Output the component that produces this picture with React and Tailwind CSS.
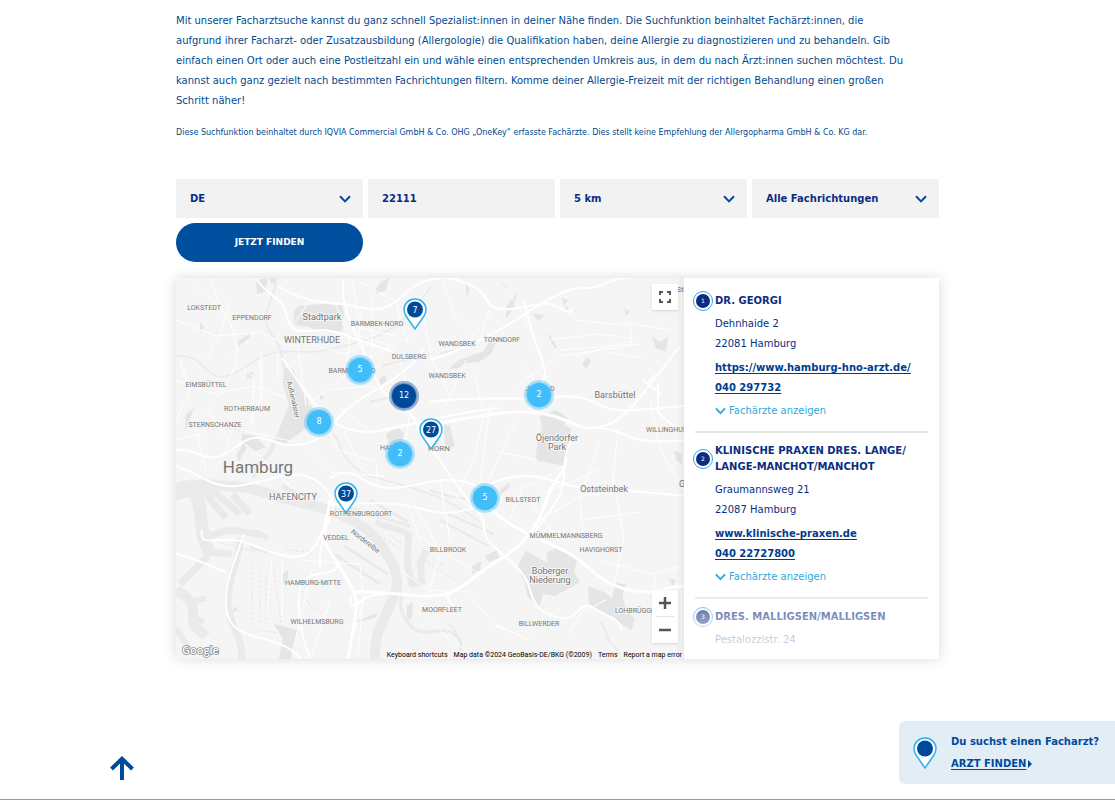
import React, { useState } from 'react';

const clusters = [
  { id: 'c1', x: 184, y: 92, count: 5 },
  { id: 'c2', x: 228, y: 118, count: 12, dark: true },
  { id: 'c3', x: 143, y: 144, count: 8 },
  { id: 'c4', x: 224, y: 176, count: 2 },
  { id: 'c5', x: 363, y: 117, count: 2 },
  { id: 'c6', x: 309, y: 220, count: 5 },
];

// x / y is the tip of the pin
const pins = [
  { id: 'p1', x: 239, y: 52, count: 7 },
  { id: 'p2', x: 255, y: 172, count: 27 },
  { id: 'p3', x: 170, y: 236, count: 37 },
];

const labels = [
  { t: 'LOKSTEDT', x: 204, y: 310, s: 7 },
  { t: 'EPPENDORF', x: 252, y: 320, s: 7 },
  { t: 'Stadtpark', x: 322, y: 320, s: 9 },
  { t: 'BARMBEK-NORD', x: 377, y: 326, s: 7 },
  { t: 'WINTERHUDE', x: 312, y: 343, s: 9 },
  { t: 'DULSBERG', x: 409, y: 359, s: 7 },
  { t: 'WANDSBEK', x: 457, y: 346, s: 7 },
  { t: 'TONNDORF', x: 502, y: 342, s: 7 },
  { t: 'BARMBEK-SÜD', x: 352, y: 373, s: 7 },
  { t: 'WANDSBEK', x: 447, y: 378, s: 7 },
  { t: 'EIMSBÜTTEL', x: 206, y: 387, s: 7 },
  { t: 'ROTHERBAUM', x: 247, y: 411, s: 7 },
  { t: 'STERNSCHANZE', x: 215, y: 427, s: 7 },
  { t: 'JENFELD', x: 540, y: 391, s: 7 },
  { t: 'Barsbüttel', x: 615, y: 398, s: 9 },
  { t: 'WILLINGHUSEN', x: 671, y: 432, s: 7 },
  { t: 'Öjendorfer', x: 557, y: 441, s: 9 },
  { t: 'Park', x: 557, y: 450, s: 9 },
  { t: 'HAMM', x: 391, y: 450, s: 7 },
  { t: 'HORN', x: 439, y: 451, s: 8 },
  { t: 'Hamburg', x: 258, y: 473, s: 17 },
  { t: 'HAFENCITY', x: 293, y: 500, s: 9 },
  { t: 'ROTHENBURGSORT', x: 361, y: 516, s: 7 },
  { t: 'BILLSTEDT', x: 523, y: 502, s: 7 },
  { t: 'Oststeinbek', x: 604, y: 492, s: 9 },
  { t: 'VEDDEL', x: 336, y: 540, s: 7 },
  { t: 'MÜMMELMANNSBERG', x: 566, y: 538, s: 7 },
  { t: 'BILLBROOK', x: 448, y: 552, s: 7 },
  { t: 'HAVIGHORST', x: 601, y: 552, s: 7 },
  { t: 'Boberger', x: 550, y: 574, s: 9 },
  { t: 'Niederung', x: 550, y: 583, s: 9 },
  { t: 'HAMBURG-MITTE', x: 313, y: 585, s: 7 },
  { t: 'MOORFLEET', x: 442, y: 612, s: 7 },
  { t: 'LOHBRÜGGE', x: 635, y: 613, s: 7 },
  { t: 'WILHELMSBURG', x: 317, y: 624, s: 7 },
  { t: 'BILLWERDER', x: 539, y: 626, s: 7 },
  { t: 'Sta', x: 682, y: 292, s: 8 },
  { t: 'G', x: 682, y: 487, s: 9 },
];

const doctors = [
  {
    name: ['DR. GEORGI'],
    street: 'Dehnhaide 2',
    city: '22081 Hamburg',
    url: 'https://www.hamburg-hno-arzt.de/',
    phone: '040 297732',
  },
  {
    name: ['KLINISCHE PRAXEN DRES. LANGE/', 'LANGE-MANCHOT/MANCHOT'],
    street: 'Graumannsweg 21',
    city: '22087 Hamburg',
    url: 'www.klinische-praxen.de',
    phone: '040 22727800',
  },
  {
    name: ['DRES. MALLIGSEN/MALLIGSEN'],
    street: 'Pestalozzistr. 24',
  },
];

function Chevron({ className }) {
  return (
    <svg viewBox="0 0 12 8" className={className} fill="none" stroke="currentColor" strokeWidth="2" aria-hidden="true">
      <path d="M1 1.2 6 6.4 11 1.2" />
    </svg>
  );
}

function Pin({ count }) {
  return (
    <svg viewBox="0 0 24 32" className="h-8 w-6" aria-hidden="true">
      <path
        d="M12 1C5.8 1 1 5.7 1 11.6c0 2.6 1 4.7 2.3 6.9L12 31l8.700-12.500C22 16.300 23 14.200 23 11.600 23 5.700 18.200 1 12 1Z"
        fill="#fff"
        stroke="#2fb4ea"
        strokeWidth="1.5"
      />
      <circle cx="12" cy="11.500" r="8" fill="#004a9c" />
      {count && (
        <text x="12" y="14.500" textAnchor="middle" fontSize="8" fill="#fff">
          {count}
        </text>
      )}
    </svg>
  );
}

function SelectField({ label, options }) {
  const [value, setValue] = useState(options[0]);
  return (
    <div className="relative">
      <select
        aria-label={label}
        value={value}
        onChange={(e) => setValue(e.target.value)}
        className="h-[39px] w-full appearance-none bg-[#f2f2f2] pr-8 pl-3.5 font-bold text-[#0a2d82]"
      >
        {options.map((o) => (
          <option key={o}>{o}</option>
        ))}
      </select>
      <Chevron className="pointer-events-none absolute top-4 right-3 h-2 w-3 text-[#004a9c]" />
    </div>
  );
}

function CityMap() {
  return (
    <svg
      viewBox="176 278 508 381"
      preserveAspectRatio="xMidYMid slice"
      className="h-full w-full"
      role="img"
      aria-label="Karte von Hamburg"
    >
      <rect x="176" y="278" width="508" height="381" fill="#f5f5f5" />

      {/* parks */}
      <g fill="#e5e5e5">
        <path d="m298 306 22-2 22 1 2 9-2 17-22 1-11-5-16-2 1-13z" />
        <path d="m540 416 16-6 12 8-4 7 7 3-2 22-4 16-30-6 3-20 4-13z" />
        <path d="m526 551 22 12-2-10 12-6 19 13-3 12 6 10-14 8-11 6-12-2-4 14-12-12-2-14-8-14z" />
        <path d="m588 586 18 7 6 6 4-17 8 4-1 12 4 13 8 8-4 12-8-6-22-12-12-9z" />
        <path d="m242 434 14 2-2 10-12-2zM256 437l10 10-10 4-8-5zM236 456l7-12 4 3-8 15z" />
        <path d="m652 336 7 6 9-5-2 15-10-4z" />
        <path d="m444 424 6 2 5 20-10 4zM432 432l8 8-3 8-6-2z" />
        <path d="m256 280 12-2-3 14-8 2zM237 342l12-8 1 3-11 9zM268 276h12l-8 8z" />
        <path d="m375 290 6-8 8-4-3 12-9 4zM507 305l10-12-3 14-8 12zM532 314l14 1-8 6zM562 310l6-4-1 5z" />
        <path d="m470 356 14-5 5-9 9-3-7 15-12 8-12 1-8 5-10 1 8-8z" />
        <path d="m549 333 8 14-2 2-6-11zM582 364l6-7 3 4-5 8zM624 308l6 4-4 3zM590 430l3-4 2 2z" />
        <path d="m472 566 10-5-2 9-8 4zM485 556l12-6 2 8-10 4zM500 490l10-8-1 6-10 8z" />
        <path d="m274 624 23 6-6 29h-12l4-20zM283 574l5-4v12l-5 3zM234 606l4 4-5 2zM356 621l22-8-3 5-17 4z" />
        <path d="m402 394 3-4 4 4v8l-6-2zM320 394l4 4-4 3zM379 379l6-4 2 6-6 4zM386 434l12-8 6 8-3 8-12 2z" />
        <path d="m674 450 8 4v10l-6-4zM618 584h8l-2 6-6-2zM668 578l8 2-3 6zM407 606l6-4-1 16-5 3z" />
        <path d="m186 414 8-6-5 14-4 10zM200 322l4 6-4 4zM247 372h6v6h-6zM466 284l4 6-4 6zM562 298l6 2-4 6z" />
      </g>

      {/* Alster */}
      <path
        d="m284 368 9 1 8 20 12 20 4 12-23 16-8 6-12-2 6-14 9-22-6-20z"
        fill="#e5e5e5"
      />
      <g fill="none" stroke="#eaeaea">
        <path d="M285 372c-3-12-2-20-7-28-6-10-14-17-12-30 2-12 10-20 10-36" strokeWidth="2" />
        <path d="M279 434c-5 6-6 12-9 18s-16 12-16 26" strokeWidth="4" />
        <path d="M317 418c10 12 18 14 23 28s14 24 30 30 70 14 110 46" strokeWidth="1.500" />
        <path d="M176 356c24-3 28 16 40 20s28-8 42-17 34-8 48-7 40-6 66-14 42-30 60-52" strokeWidth="1.500" />
        <path d="M382 366c20-6 54-14 80-16M370 402c10-4 26-4 44-8" strokeWidth="2" />
      </g>

      {/* Elbe and the harbour basins */}
      <g fill="none" stroke="#eaeaea" strokeLinejoin="round">
        <path d="M172 491c16-6 30-4 46-5s34 2 54 9 44 10 62 17 38 18 48 34 18 28 14 44-18 34-20 52-1 14-1 20" strokeWidth="10" />
        <path d="M172 493c16-6 30-5 46-5" strokeWidth="17" />
        <path d="M196 494c8 20 2 34 13 58" strokeWidth="13" />
        <path d="M207 496 226 518M214 492l26 22M232 494l18 20" strokeWidth="7" />
        <path d="M198 540 228 530 260 534M206 552l26 2M208 556l-28 28" strokeWidth="7" />
        <path d="M176 590c12 8 18 12 17 26s8 14 13 20" strokeWidth="10" />
        <path d="M186 604 206 598M192 618l12 4M176 628l14 22" strokeWidth="6" />
        <path d="M240 538c0 24-12 36-12 62s14 32 14 60" strokeWidth="7" />
        <path d="M250 546 268 552M256 532l12 6M296 494l-14-8M262 494l-16-8" strokeWidth="5" />
        <path d="M376 522c12 6 22 6 32 12" strokeWidth="6" />
        <path d="M408 532c2 12-2 20 0 34l4 18 10-2-2-18 6-14" strokeWidth="7" />
        <path d="M402 596c-6 10 4 28 14 34s26-4 38 4 6 18 5 26" strokeWidth="3" />
        <path d="M334 554 380 584M344 546l44 28M350 508l60 18M370 500l38 22" strokeWidth="3" />
        <path d="M444 512 494 534M440 520l48 26M430 490c24 10 40 6 56 18" strokeWidth="2" />
        <path d="M600 622c10 8 4 18 14 24l10 14M448 624c8 4 12 14 14 36" strokeWidth="2" />
      </g>

      {/* small built-up blocks */}
      <g stroke="#e4e4e4" strokeWidth="1" strokeDasharray="3 2" fill="none">
        <path d="M252 562v64M260 570v54M266 578v46M274 570l8 60M258 630l28 4M300 590l10 16 14 8" />
        <path d="M384 538l14 10M388 534l14 10M424 560l34 22M428 554l16 12M502 282l8 10" />
        <path d="M228 428l18 4M188 424l28 6M212 540l44 12M286 550l26 2" />
      </g>

      {/* minor roads */}
      <g fill="none" stroke="#fff" strokeWidth="1">
        <path d="M190 278c8 16 34 24 44 56s-8 52-24 70M210 278c6 14 12 40 28 54M176 320l40 16 44-4 30 14" />
        <path d="M230 300 222 330l-16 30M176 380l38 14 40-8 32 12M226 352l28 26-2 50M260 356v44l-12 26" />
        <path d="M262 352v50M278 352v28M298 346l8 60M334 300l16 40-6 36M352 280l6 34 20 26M362 306l-4 40" />
        <path d="M372 300v50M350 326l46 10M352 334l42 12M360 282l36 20 12 42M320 410l18 40 38 12 2 30" />
        <path d="M340 408l30 24 36-8M330 390l40-4 32 16M308 404l64-48 40-20M344 430l20 46M398 354l14 50-8 44" />
        <path d="M310 448l20 24 54 4M256 452l36 36M240 430l56 12M196 430l10 40M206 408l24 34-18 34" />
        <path d="M420 300l12 60 20 40M466 360l-20 46M430 356l40-16 14-20M442 280l14 38 14 14" />
        <path d="M490 310l-12 34M508 290l20 34M474 374l10 40-10 44-18 40M490 404l-12 94M498 452l40 8" />
        <path d="M516 420l-36 80M526 366l20 34M540 350l12 50M550 340l46-6 36 4-2 8-70 10-44 30" />
        <path d="M576 320l54 6 2 14-56 16M620 322l50 8M560 350l80-6M604 352l40 6M600 440l-20 60 4 44" />
        <path d="M614 480l10 60-10 44M650 400l10 50 24 40M618 430l-6 60M640 490l-60 6-60 36M600 470l-60 24" />
        <path d="M530 500l28 40M510 520l12-32 30-14M476 510l-32-22M440 480l10 60M420 540l-14-40M580 520l60-8" />
        <path d="M300 560l60 4 4 36-16 54M312 570l-20 84M330 600l-18 54M364 590l-6 66M282 560v60M272 560l-6 58" />
        <path d="M400 570l28 20 46 2M416 600l38 46M446 630l24 26 46 2M470 596l24 28 36 16M520 636l-24-10" />
        <path d="M412 500l28 52-12 44M420 538l60 36M600 560l50 14 34-8M606 600l-24 12-14 22M656 574l-6 40" />
        <path d="M176 440l24-6 12-14M180 360l10 30-14 30M310 300l-20 30M316 346l30 8 26-12" />
      </g>

      {/* main roads */}
      <g fill="none" stroke="#fff" strokeWidth="2" strokeLinejoin="round">
        <path d="M176 450c20-2 28 12 44 6s24-20 40-18 20 10 44 6 30-30 58-46 46-26 62-48" />
        <path d="M256 278c8 14 20 18 26 26s4 22 14 26 28-4 46 4 34 10 54 20" />
        <path d="M278 286c30 20 60 16 76 20s30 8 48-10 40-20 58-18" />
        <path d="M282 358c18 26 28 42 44 58s40 18 60 14 60-16 112-22" />
        <path d="M344 278c-4 20 4 40 14 60s14 50 40 66 16 30 30 42" />
        <path d="M176 466c24 8 36 22 60 20s50-16 70-10 30 26 26 36-14 34-12 56" />
        <path d="M330 516c-10 18-14 36-28 40s-36-6-58-14-46 8-42-12" />
        <path d="M244 534c-6 20-20 46-18 72s20 28 42 34 30 14 34 22" />
        <path d="M310 659c-12-30-16-70-4-80s28-2 32-14" />
        <path d="M176 554c24 6 34 12 50 18M448 278c18 4 34 10 40 24s36 4 54 2 30 16 30 4" />
        <path d="M430 360c36-10 78-34 98-48s44-26 58-24 26-12 44-10M524 300c6 30 14 50 20 66s-16 40-14 44" />
        <path d="M430 402c40-6 70-2 102-4s50-4 66 6 40 6 86 2M680 346l-34 44c-16 20-30 40-62 38" />
        <path d="M586 428c30-2 40 10 54 12s30 2 44 0M642 380l20 14M662 370l-14 12M658 384v28l22 20" />
        <path d="M574 436c-14 20-6 40-14 58s-22 30-30 46M480 490c24-16 50-18 78-8s60 6 126 14" />
        <path d="M330 478c26-16 32 10 60 10s60-18 90 0" />
        <path d="M430 446l26 38c12 18 28 30 28 42s4 16 18 28 24 20 28 36 12 24 30 28 20-20 34-10 24 8 28 22" />
      </g>

      {/* motorways */}
      <g fill="none" stroke="#fff" strokeWidth="3" strokeLinejoin="round">
        <path d="M330 500c-4 28-12 34 0 52s24 38 26 48-4 34-8 60" />
        <path d="M352 592c30-2 48 4 78 4s42-20 66-34 40-30 50-60 18-24 20-44" />
        <path d="M430 424c34-4 72-14 100-12s40 12 56 16" />
        <path d="M490 508c20 22 60 34 80 46s30 30 60 36 36-4 54-4" />
        <path d="M334 504c30 0 60-4 92 6s60-10 76-8" strokeWidth="2" />
        <path d="M354 592c-8 8-2 20 2 10M384 594c-12 0-24 4-28 14M446 598l14-12M446 596l10 14" strokeWidth="2" />
      </g>

      {/* place names */}
      <g
        fill="#757575"
        stroke="#f5f5f5"
        strokeWidth="2"
        paintOrder="stroke"
        textAnchor="middle"
        className="font-['Roboto',sans-serif]"
      >
        {labels.map((l) => (
          <text key={l.t + l.x} x={l.x} y={l.y} fontSize={l.s}>
            {l.t}
          </text>
        ))}
        <text transform="translate(291 400) rotate(77)" fontSize="7">Außenalster</text>
        <text transform="translate(364 543) rotate(38)" fontSize="7">Norderelbe</text>
      </g>

      <text
        x="182"
        y="654"
        fontSize="11"
        fill="#fff"
        stroke="#8a8a8a"
        strokeWidth="1.500"
        paintOrder="stroke"
        className="font-['Open_Sans',sans-serif] font-semibold"
      >
        Google
      </text>
    </svg>
  );
}

function MapPanel() {
  return (
    <div className="relative min-w-0 flex-1 overflow-hidden">
      <CityMap />

      {clusters.map((c) => (
        <button
          key={c.id}
          style={{ left: c.x, top: c.y }}
          className={
            c.dark
              ? 'absolute flex size-[30px] -translate-1/2 items-center justify-center rounded-full border-2 border-[#004a9c]/40 bg-[#004a9c]/60 bg-clip-padding'
              : 'absolute flex size-[30px] -translate-1/2 items-center justify-center rounded-full border-2 border-[#41bdfa]/40 bg-[#41bdfa]/60 bg-clip-padding'
          }
        >
          <span
            className={
              c.dark
                ? 'size-6 rounded-full bg-[#004a9c] text-center text-[8px] leading-6 text-white'
                : 'size-6 rounded-full bg-[#41bdfa] text-center text-[8px] leading-6 text-white'
            }
          >
            {c.count}
          </span>
        </button>
      ))}

      {pins.map((p) => (
        <button
          key={p.id}
          style={{ left: p.x, top: p.y }}
          className="absolute -translate-x-1/2 -translate-y-full"
        >
          <Pin count={p.count} />
        </button>
      ))}

      <button
        aria-label="Toggle fullscreen view"
        className="absolute top-1.5 right-1.5 flex size-[26px] items-center justify-center bg-white text-[#555] shadow-sm"
      >
        <svg viewBox="0 0 12 12" className="size-3" fill="none" stroke="currentColor" strokeWidth="2">
          <path d="M1 4V1h3M8 1h3v3M11 8v3H8M4 11H1V8" />
        </svg>
      </button>

      <div className="absolute right-1.5 bottom-4 flex w-[26px] flex-col bg-white text-[#555] shadow-sm">
        <button aria-label="Zoom in" className="flex h-[26px] items-center justify-center">
          <svg viewBox="0 0 12 12" className="size-3" stroke="currentColor" strokeWidth="2.500">
            <path d="M0 6h12M6 0v12" />
          </svg>
        </button>
        <hr className="mx-1 border-[#e6e6e6]" />
        <button aria-label="Zoom out" className="flex h-[26px] items-center justify-center">
          <svg viewBox="0 0 12 12" className="size-3" stroke="currentColor" strokeWidth="2.500">
            <path d="M0 6h12" />
          </svg>
        </button>
      </div>

      <div className="absolute right-0 bottom-0 flex gap-1.5 bg-[#f5f5f5]/70 px-0.5 font-['Roboto',sans-serif] text-[7px] leading-2 whitespace-nowrap text-black">
        <button>Keyboard shortcuts</button>
        <span>Map data ©2024 GeoBasis-DE/BKG (©2009)</span>
        <a href="#terms">Terms</a>
        <a href="#report">Report a map error</a>
      </div>
      <div className="pointer-events-none absolute inset-y-0 right-0 w-2 bg-linear-to-l from-black/5 to-transparent" />
    </div>
  );
}

function Doctor({ doctor, number }) {
  return (
    <li className="border-b-2 border-[#e3e5e7] pt-2.5 pb-2.5 first:pt-0 last:border-0">
      <div className="flex items-center">
        <span className="-my-1 -ml-0.5 flex size-5 shrink-0 items-center justify-center rounded-full border border-[#2fa9e0]">
          <span className="size-3.5 rounded-full bg-[#0a2d82] text-center text-[6px] leading-3.5 text-white">
            {number}
          </span>
        </span>
        <h3 className="ml-0.5 leading-4 font-bold whitespace-nowrap">
          {doctor.name.map((n) => (
            <span key={n} className="block">{n}</span>
          ))}
        </h3>
      </div>
      <div className="pl-5">
        <p className="mt-[5px] leading-5">
          {doctor.street}
          <br />
          {doctor.city}
        </p>
        {doctor.url && (
          <>
            <p className="mt-1 leading-5 font-bold whitespace-nowrap text-[#003c8c] underline underline-offset-2">
              <a href="#website" className="block">{doctor.url}</a>
              <a href="#phone" className="block">{doctor.phone}</a>
            </p>
            <button className="mt-[3px] flex items-center gap-[3px] leading-5 text-[#2fa9dc]">
              <Chevron className="h-2 w-[11px]" />
              Fachärzte anzeigen
            </button>
          </>
        )}
      </div>
    </li>
  );
}

export default function App() {
  const [zip, setZip] = useState('22111');

  return (
    <div className="min-h-screen border-b border-[#9b9b9b] bg-white font-['DejaVu_Sans',sans-serif] text-[10px] text-[#004a8f]">
      <main className="mx-auto max-w-[763px] pt-[11px]">
        <p className="leading-5">
          Mit unserer Facharztsuche kannst du ganz schnell Spezialist:innen in deiner Nähe finden. Die
          Suchfunktion beinhaltet Fachärzt:innen, die
          <br />
          aufgrund ihrer Facharzt- oder Zusatzausbildung (Allergologie) die Qualifikation haben, deine
          Allergie zu diagnostizieren und zu behandeln. Gib
          <br />
          einfach einen Ort oder auch eine Postleitzahl ein und wähle einen entsprechenden Umkreis aus, in
          dem du nach Ärzt:innen suchen möchtest. Du
          <br />
          kannst auch ganz gezielt nach bestimmten Fachrichtungen filtern. Komme deiner Allergie-Freizeit
          mit der richtigen Behandlung einen großen
          <br />
          Schritt näher!
        </p>
        <p className="mt-3 text-[8px] leading-5">
          Diese Suchfunktion beinhaltet durch IQVIA Commercial GmbH &amp; Co. OHG „OneKey“ erfasste
          Fachärzte. Dies stellt keine Empfehlung der Allergopharma GmbH &amp; Co. KG dar.
        </p>

        <form onSubmit={(e) => e.preventDefault()} className="mt-9 grid grid-cols-4 gap-[5px]">
          <SelectField label="Land" options={['DE', 'AT', 'CH']} />
          <input
            aria-label="Ort oder Postleitzahl"
            value={zip}
            onChange={(e) => setZip(e.target.value)}
            className="h-[39px] min-w-0 bg-[#f2f2f2] px-3.5 font-bold text-[#0a2d82]"
          />
          <SelectField label="Umkreis" options={['5 km', '10 km', '25 km']} />
          <SelectField label="Fachrichtung" options={['Alle Fachrichtungen', 'Allergologie']} />
          <button className="h-[39px] rounded-full bg-[#004f9f] text-[9px] font-bold text-white">
            JETZT FINDEN
          </button>
        </form>

        <section className="mt-4 flex h-[381px] shadow-[0_0_12px_rgba(0,0,0,0.15)]">
          <MapPanel />
          <div className="relative w-[255px] shrink-0 overflow-hidden bg-white px-[11px] pt-[15px] text-[#0a2d82]">
            <ul>
              {doctors.map((d, i) => (
                <Doctor key={d.street} doctor={d} number={i + 1} />
              ))}
            </ul>
            <div className="pointer-events-none absolute inset-x-0 bottom-0 h-20 bg-linear-to-t from-white to-transparent" />
          </div>
        </section>
      </main>

      <a href="#top" aria-label="Nach oben" className="fixed bottom-5 left-[110px] text-[#004a9c]">
        <svg viewBox="0 0 24 24" className="size-6" fill="none" stroke="currentColor" strokeWidth="4">
          <path d="M12 24V3M1.500 13 12 2.800 22.500 13" />
        </svg>
      </a>

      <aside className="fixed right-0 bottom-4 flex w-[216px] items-center rounded-l-md bg-[#e3edf6] pt-2.5 pb-[9px] pl-3.5 font-bold whitespace-nowrap text-[#004a9c]">
        <Pin />
        <div className="ml-3.5 leading-[22px]">
          <p>Du suchst einen Facharzt?</p>
          <a href="#finden" className="flex items-center gap-0.5">
            <span className="underline underline-offset-2">ARZT FINDEN</span>
            <svg viewBox="0 0 4 8" className="h-2 w-1" fill="currentColor">
              <path d="M0 0 4 4 0 8z" />
            </svg>
          </a>
        </div>
      </aside>
    </div>
  );
}
